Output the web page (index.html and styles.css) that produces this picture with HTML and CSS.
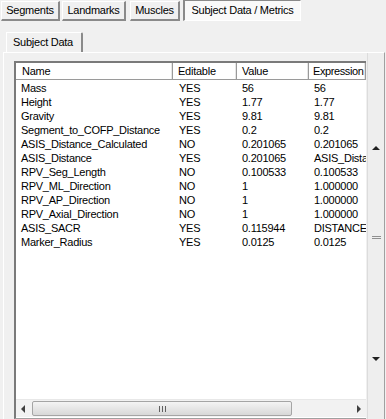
FILE: index.html
```html
<!DOCTYPE html>
<html>
<head>
<meta charset="utf-8">
<link rel="stylesheet" href="styles.css">
</head>
<body>
<div class="app">
  <div class="tabs">
    <div class="tab t1">Segments</div>
    <div class="tab t2">Landmarks</div>
    <div class="tab t3">Muscles</div>
    <div class="tab t4 active">Subject Data / Metrics</div>
  </div>
  <div class="subtabs">
    <div class="subtab">Subject Data</div>
  </div>
  <div class="panel">
    <div class="list">
      <div class="header">
        <div class="hc c1">Name</div>
        <div class="hc c2">Editable</div>
        <div class="hc c3">Value</div>
        <div class="hc c4">Expression</div>
      </div>
      <div class="rows">
        <div class="row"><span class="c1">Mass</span><span class="c2">YES</span><span class="c3">56</span><span class="c4">56</span></div>
        <div class="row"><span class="c1">Height</span><span class="c2">YES</span><span class="c3">1.77</span><span class="c4">1.77</span></div>
        <div class="row"><span class="c1">Gravity</span><span class="c2">YES</span><span class="c3">9.81</span><span class="c4">9.81</span></div>
        <div class="row"><span class="c1">Segment_to_COFP_Distance</span><span class="c2">YES</span><span class="c3">0.2</span><span class="c4">0.2</span></div>
        <div class="row"><span class="c1">ASIS_Distance_Calculated</span><span class="c2">NO</span><span class="c3">0.201065</span><span class="c4">0.201065</span></div>
        <div class="row"><span class="c1">ASIS_Distance</span><span class="c2">YES</span><span class="c3">0.201065</span><span class="c4">ASIS_Distance</span></div>
        <div class="row"><span class="c1">RPV_Seg_Length</span><span class="c2">NO</span><span class="c3">0.100533</span><span class="c4">0.100533</span></div>
        <div class="row"><span class="c1">RPV_ML_Direction</span><span class="c2">NO</span><span class="c3">1</span><span class="c4">1.000000</span></div>
        <div class="row"><span class="c1">RPV_AP_Direction</span><span class="c2">NO</span><span class="c3">1</span><span class="c4">1.000000</span></div>
        <div class="row"><span class="c1">RPV_Axial_Direction</span><span class="c2">NO</span><span class="c3">1</span><span class="c4">1.000000</span></div>
        <div class="row"><span class="c1">ASIS_SACR</span><span class="c2">YES</span><span class="c3">0.115944</span><span class="c4">DISTANCE(</span></div>
        <div class="row"><span class="c1">Marker_Radius</span><span class="c2">YES</span><span class="c3">0.0125</span><span class="c4">0.0125</span></div>
      </div>
      <div class="hscroll">
        <div class="harrow left"></div>
        <div class="hthumb"><span class="grip"></span></div>
        <div class="htrack"></div>
        <div class="harrow right"></div>
      </div>
    </div>
    <div class="vscroll">
      <div class="varrow up"></div>
      <div class="vgrip"></div>
      <div class="varrow down"></div>
    </div>
  </div>
</div>
</body>
</html>
```

FILE: styles.css
```css
html, body {
  margin: 0;
  padding: 0;
  background: #f0f0f0;
  width: 386px;
  height: 419px;
  overflow: hidden;
}
.app {
  font-family: "Liberation Sans", Arial, sans-serif;
  font-size: 11px;
  letter-spacing: -0.25px;
  color: #000;
}
.tabs {
  display: flex;
  padding: 1px 0 0 1px;
  height: 20px;
}
.tab {
  box-sizing: border-box;
  height: 20px;
  line-height: 17px;
  text-align: center;
  background: #f0f0f0;
  border-top: 1px solid #fff;
  border-left: 1px solid #fff;
  border-right: 2px solid #8a8a8a;
  border-bottom: 2px solid #8a8a8a;
}
.t1 { width: 59px; }
.t2 { width: 64px; margin-left: 2px; }
.t3 { width: 50px; margin-left: 4px; }
.t4 { width: 118px; margin-left: 3px; }
.tab.active {
  background: #f9f9f9;
  border-top: 1px solid #8a8a8a;
  border-left: 2px solid #8a8a8a;
  border-right: 1px solid #fff;
  border-bottom: 1px solid #fff;
  height: 21px;
  margin-top: -1px;
  line-height: 19px;
}
.subtabs {
  display: flex;
  padding: 11px 0 0 6px;
}
.subtab {
  box-sizing: border-box;
  width: 77px;
  height: 20px;
  line-height: 19px;
  padding-left: 6px;
  background: #f0f0f0;
  border-top: 1px solid #fff;
  border-left: 1px solid #fff;
  border-right: 2px solid #8a8a8a;
  border-top-right-radius: 2px;
}
.panel {
  box-sizing: border-box;
  margin-left: 3px;
  width: 382px;
  height: 367px;
  border-top: 1px solid #fff;
  border-left: 1px solid #fff;
  border-right: 1px solid #a0a0a0;
  display: flex;
  padding-left: 10px;
}
.list {
  box-sizing: border-box;
  margin-top: 8px;
  width: 353px;
  height: 358px;
  background: #fff;
  border-top: 2px solid #7a7a7a;
  border-left: 2px solid #7a7a7a;
  border-bottom: 1px solid #a0a0a0;
  display: flex;
  flex-direction: column;
}
.header {
  display: flex;
  height: 17px;
  box-sizing: border-box;
  border-bottom: 1px solid #9a9a9a;
  background: #fff;
}
.hc {
  box-sizing: border-box;
  padding-left: 5px;
  line-height: 16px;
  border-right: 1px solid #9a9a9a;
  box-shadow: inset -1px 0 0 #e6e6e6;
}
.c1 { width: 156px; }
.c2 { width: 64px; }
.c3 { width: 72px; }
.c4 { width: 57px; overflow: hidden; white-space: nowrap; }
.hc.c1 { width: 157px; padding-left: 6px; }
.hc.c4 { padding-left: 4px; letter-spacing: -0.4px; }
.rows {
  flex: 1;
  padding-top: 1px;
}
.row {
  display: flex;
  height: 14px;
  line-height: 14px;
  white-space: nowrap;
}
.row span { display: block; overflow: hidden; }
.row .c1 { width: 157px; padding-left: 5px; box-sizing: border-box; }
.row .c2 { padding-left: 6px; box-sizing: border-box; }
.row .c3 { padding-left: 5px; box-sizing: border-box; }
.row .c4 { padding-left: 5px; box-sizing: border-box; }
.hscroll {
  display: flex;
  height: 17px;
  background: #f2f2f2;
  border-top: 1px solid #e8e8e8;
  margin-bottom: 1px;
}
.harrow {
  width: 16px;
  position: relative;
}
.harrow::after {
  content: "";
  position: absolute;
  top: 5px;
  width: 0;
  height: 0;
  border-top: 4px solid transparent;
  border-bottom: 4px solid transparent;
}
.harrow.left::after { left: 5px; border-right: 4px solid #404040; }
.harrow.right::after { left: 7px; border-left: 4px solid #404040; }
.hthumb {
  box-sizing: border-box;
  width: 260px;
  margin: 1px 0;
  border: 1px solid #a5a5a5;
  border-radius: 2px;
  background: linear-gradient(#f4f4f4, #e6e6e6 50%, #d8d8d8);
  display: flex;
  align-items: center;
  justify-content: center;
}
.grip {
  width: 7px;
  height: 6px;
  background: repeating-linear-gradient(90deg, #606060 0 1px, transparent 1px 3px);
}
.htrack { flex: 1; }
.vscroll {
  box-sizing: border-box;
  width: 17px;
  margin-left: 1px;
  height: 366px;
  border-left: 1px solid #dcdcdc;
  background: #eeeeee;
  display: flex;
  flex-direction: column;
  align-items: center;
}
.varrow {
  width: 0;
  height: 0;
  border-left: 4px solid transparent;
  border-right: 4px solid transparent;
}
.varrow.up { margin-top: 93px; border-bottom: 4px solid #202020; }
.vgrip {
  margin-top: 86px;
  width: 9px;
  height: 3px;
  border-top: 1px solid #909090;
  border-bottom: 1px solid #909090;
  box-sizing: border-box;
}
.varrow.down { margin-top: 118px; border-top: 4px solid #202020; }
```
